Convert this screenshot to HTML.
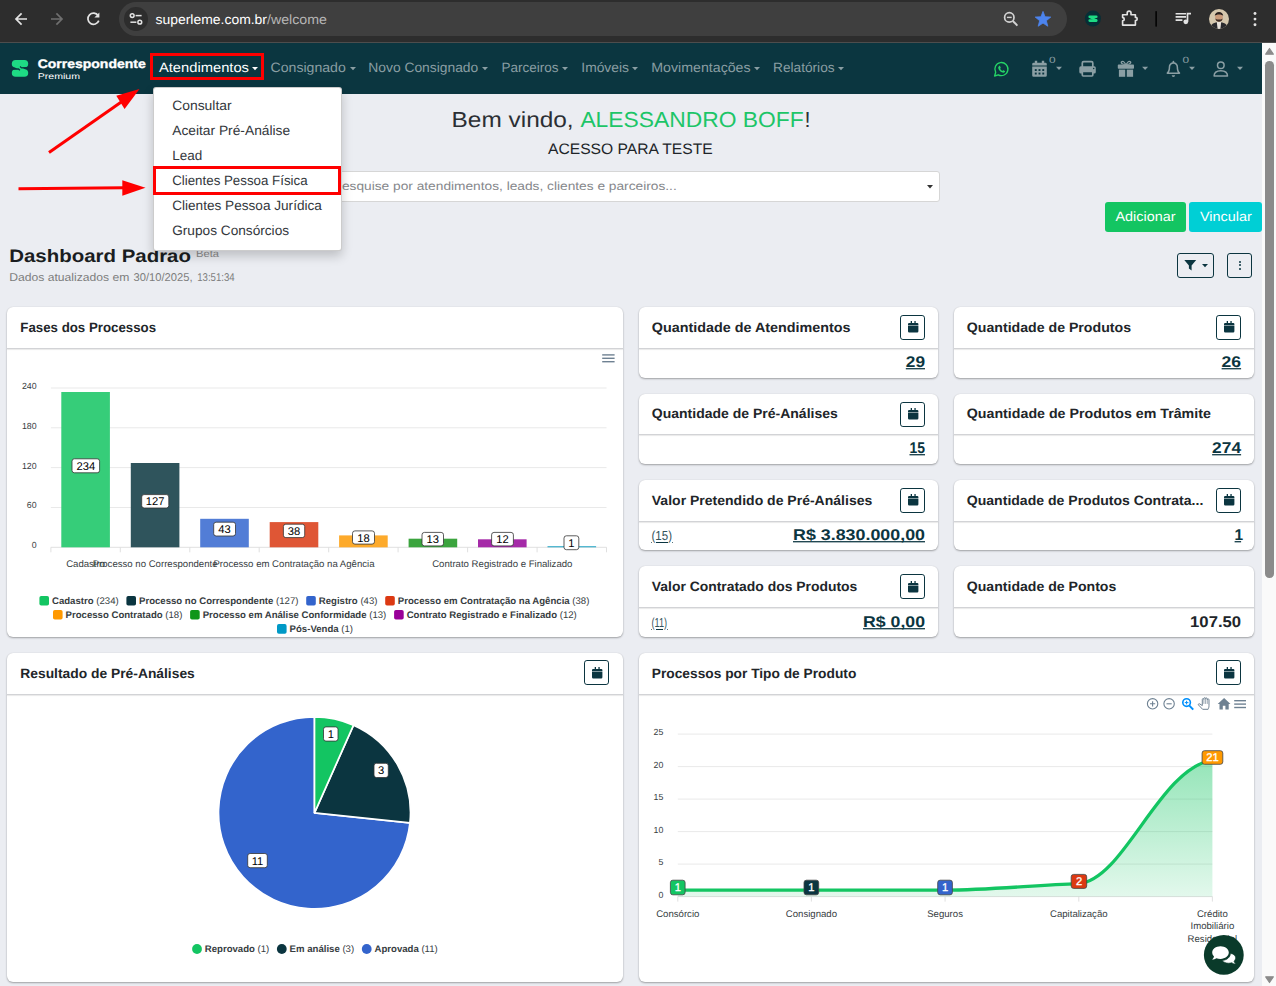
<!DOCTYPE html>
<html lang="pt-BR"><head><meta charset="utf-8"><title>Dashboard</title>
<style>
html,body{margin:0;padding:0}
body{text-rendering:geometricPrecision;width:1276px;height:986px;overflow:hidden;position:relative;background:#ebedf2;font-family:"Liberation Sans",sans-serif}
.a{position:absolute;box-sizing:border-box}
.t{position:absolute;white-space:nowrap;font-family:"Liberation Sans",sans-serif}
svg{position:absolute;overflow:visible;text-rendering:geometricPrecision}
svg.tx{left:0;top:0;font-family:"Liberation Sans",sans-serif}
svg.tx text{white-space:pre}
.card{position:absolute;box-sizing:border-box;background:#fff;border-radius:6px;box-shadow:0 1px 2px rgba(0,0,0,.32),0 0 1px rgba(0,0,0,.12)}
.hl{position:absolute;height:1px;background:#d2d3d6;box-shadow:0 1px 1px rgba(0,0,0,.10)}
.cb{position:absolute;box-sizing:border-box;border:1.2px solid #0b3540;border-radius:2.9px;background:#fff}
</style></head><body>
<div class="a" style="left:0.00px;top:0.00px;width:1276.00px;height:42.00px;background:#2d2d2d"></div>
<div class="a" style="left:0.00px;top:42.00px;width:1276.00px;height:1.00px;background:#4d4d4d"></div>
<div class="a" style="left:119.00px;top:2.20px;width:948.30px;height:33.60px;background:#3f3f3f;border-radius:17px"></div>
<div class="a" style="left:124.20px;top:7.00px;width:23.60px;height:23.60px;background:#2d2d2d;border-radius:50%"></div>
<svg class="tx" width="1" height="1"><text x="155.50" y="23.70" font-size="13.40" fill="#ffffff" textLength="111.50" lengthAdjust="spacingAndGlyphs">superleme.com.br</text></svg>
<svg class="tx" width="1" height="1"><text x="267.00" y="23.70" font-size="13.40" fill="#b5b5b5" textLength="60.00" lengthAdjust="spacingAndGlyphs">/welcome</text></svg>
<svg style="left:0;top:0" width="1276" height="42" viewBox="0 0 1276 42">
<g fill="none" stroke="#e3e3e3" stroke-width="1.7" stroke-linecap="butt" stroke-linejoin="miter"><path d="M27 19 H16.4 M21.6 13.4 L16 19 L21.6 24.6"/></g>
<g fill="none" stroke="#6f6f6f" stroke-width="1.7"><path d="M51 19 H61.6 M56.4 13.4 L62 19 L56.4 24.6"/></g>
<g fill="none" stroke="#e3e3e3" stroke-width="1.7"><path d="M98.2 15.6 A5.6 5.6 0 1 0 98.8 20.6"/></g><path d="M99.4 12.6 V17.6 H94.4 Z" fill="#e3e3e3"/>
<g fill="none" stroke="#e3e3e3" stroke-width="1.5"><circle cx="132.2" cy="15.6" r="1.9"/><path d="M135.6 15.6 H141.6"/><circle cx="139.8" cy="22.2" r="1.9"/><path d="M130.4 22.2 H136.4"/></g>
<g fill="none" stroke="#d2d2d2" stroke-width="1.7"><circle cx="1009.3" cy="17.4" r="4.7"/><path d="M1012.8 21 L1017.4 25.600" stroke-width="1.900"/><path d="M1006.900 17.400 H1011.700" stroke-width="1.400"/></g>
<polygon points="1043.00,11.40 1045.06,16.77 1050.80,17.07 1046.33,20.68 1047.82,26.23 1043.00,23.10 1038.18,26.23 1039.67,20.68 1035.20,17.07 1040.94,16.77" fill="#4c84ee" stroke="#4c84ee" stroke-width="0.8" stroke-linejoin="round"/>
<circle cx="1092.9" cy="18.6" r="8" fill="#062e36"/>
<g stroke="#1edb84" stroke-linecap="round" fill="none"><path d="M1089.700 16.700 H1096.300 M1089.700 20.600 H1096.300" stroke-width="2.600"/><path d="M1089.900 17 L1096.100 20.300" stroke-width="2.100"/></g>
<path d="M1122.6 14.7 H1127.2 V13.1 a1.9 1.9 0 0 1 3.800 0 V14.7 H1135.400 V17.400 h.2 a1.600 1.600 0 0 1 0 3.200 h-.2 V25.100 H1122.600 V20.700 h.1 a1.550 1.550 0 0 0 0 -3.100 h-.1 Z" fill="none" stroke="#e3e3e3" stroke-width="1.650" stroke-linejoin="round"/>
<rect x="1155.3" y="11.2" width="1.7" height="15.4" fill="#050505"/>
<g fill="none" stroke="#e3e3e3" stroke-width="1.6"><path d="M1175.6 13.7 H1186 M1175.6 16.9 H1186 M1175.6 20.1 H1182.4"/><path d="M1187.500 21.800 V13.700 H1191" stroke-width="1.700"/></g><circle cx="1185.800" cy="21.800" r="2.400" fill="#e3e3e3"/>
<defs><clipPath id="av"><circle cx="1219" cy="19" r="10"/></clipPath></defs>
<g clip-path="url(#av)"><rect x="1209" y="9" width="20" height="20" fill="#d5c7ad"/><ellipse cx="1219" cy="27.5" rx="8.5" ry="5.5" fill="#2a2a2e"/><path d="M1216.8 22 h4.4 l-.8 7 h-2.8 z" fill="#e8e2da"/><ellipse cx="1219" cy="17" rx="3.9" ry="4.7" fill="#c99a7a"/><path d="M1214.8 16 c0 -5.4 8.4 -5.4 8.4 0 c-1 -2 -7.4 -2 -8.4 0 z" fill="#2b2220"/><path d="M1215.4 18.4 c.4 4.4 6.8 4.4 7.2 0 c-1.6 1.6 -5.6 1.6 -7.2 0 z" fill="#3a2a24"/></g>
<circle cx="1255" cy="13.5" r="1.45" fill="#e3e3e3"/>
<circle cx="1255" cy="19.1" r="1.45" fill="#e3e3e3"/>
<circle cx="1255" cy="24.7" r="1.45" fill="#e3e3e3"/>
</svg>
<div class="a" style="left:0.00px;top:43.00px;width:1262.00px;height:50.80px;background:#0b3640"></div>
<div class="a" style="left:1262.00px;top:43.00px;width:14.00px;height:943.00px;background:#fafafa"></div>
<div class="a" style="left:1265.20px;top:61.00px;width:8.60px;height:516.50px;background:#8b8b8b;border-radius:4.3px"></div>
<svg style="left:1264px;top:47px" width="11" height="9"><path d="M1.700 7.200 L5.500 1.500 L9.300 7.200 Z" fill="#8b8b8b" stroke="#8b8b8b" stroke-width="1.200" stroke-linejoin="round"/></svg>
<svg style="left:1264px;top:975px" width="11" height="9"><path d="M1.700 1.800 L5.500 7.500 L9.300 1.800 Z" fill="#8b8b8b" stroke="#8b8b8b" stroke-width="1.200" stroke-linejoin="round"/></svg>
<svg style="left:0;top:0" width="40" height="90" viewBox="0 0 40 90"><g fill="#1edb84"><rect x="11.8" y="60" width="16.4" height="7.6" rx="3.8"/><rect x="11.8" y="69.2" width="16.4" height="7.6" rx="3.8"/><path d="M12.4 65 L21 66.4 L27.6 71.6 L19 70.6 Z"/></g><g stroke="#0b3540" stroke-width="1.3" fill="none"><path d="M29 67.6 L21.6 67.9 L20 66.6"/><path d="M11 69.1 L18.4 68.9 L20 70.2"/></g></svg>
<svg class="tx" width="1" height="1"><text x="37.70" y="67.70" font-size="12.40" fill="#ffffff" font-weight="700" stroke="#ffffff" stroke-width="0.35" textLength="108.00" lengthAdjust="spacingAndGlyphs">Correspondente</text></svg>
<svg class="tx" width="1" height="1"><text x="37.70" y="78.60" font-size="8.30" fill="#ffffff" textLength="42.30" lengthAdjust="spacingAndGlyphs">Premium</text></svg>
<svg class="tx" width="1" height="1"><text x="158.90" y="72.00" font-size="13.50" fill="#ffffff" textLength="90.10" lengthAdjust="spacingAndGlyphs">Atendimentos</text></svg>
<svg style="left:252.3px;top:66.6px" width="6" height="4"><path d="M0 0 L6 0 L3 3.300 Z" fill="#ffffff"/></svg>
<svg class="tx" width="1" height="1"><text x="270.50" y="72.00" font-size="13.50" fill="#8a9ea3" textLength="75.30" lengthAdjust="spacingAndGlyphs">Consignado</text></svg>
<svg style="left:349.5px;top:66.6px" width="6" height="4"><path d="M0 0 L6 0 L3 3.300 Z" fill="#8a9ea3"/></svg>
<svg class="tx" width="1" height="1"><text x="368.30" y="72.00" font-size="13.50" fill="#8a9ea3" textLength="109.90" lengthAdjust="spacingAndGlyphs">Novo Consignado</text></svg>
<svg style="left:482.0px;top:66.6px" width="6" height="4"><path d="M0 0 L6 0 L3 3.300 Z" fill="#8a9ea3"/></svg>
<svg class="tx" width="1" height="1"><text x="501.50" y="72.00" font-size="13.50" fill="#8a9ea3" textLength="56.90" lengthAdjust="spacingAndGlyphs">Parceiros</text></svg>
<svg style="left:562.2px;top:66.6px" width="6" height="4"><path d="M0 0 L6 0 L3 3.300 Z" fill="#8a9ea3"/></svg>
<svg class="tx" width="1" height="1"><text x="581.30" y="72.00" font-size="13.50" fill="#8a9ea3" textLength="47.70" lengthAdjust="spacingAndGlyphs">Imóveis</text></svg>
<svg style="left:632.2px;top:66.6px" width="6" height="4"><path d="M0 0 L6 0 L3 3.300 Z" fill="#8a9ea3"/></svg>
<svg class="tx" width="1" height="1"><text x="651.30" y="72.00" font-size="13.50" fill="#8a9ea3" textLength="99.30" lengthAdjust="spacingAndGlyphs">Movimentações</text></svg>
<svg style="left:754.2px;top:66.6px" width="6" height="4"><path d="M0 0 L6 0 L3 3.300 Z" fill="#8a9ea3"/></svg>
<svg class="tx" width="1" height="1"><text x="773.00" y="72.00" font-size="13.50" fill="#8a9ea3" textLength="61.60" lengthAdjust="spacingAndGlyphs">Relatórios</text></svg>
<svg style="left:838.2px;top:66.6px" width="6" height="4"><path d="M0 0 L6 0 L3 3.300 Z" fill="#8a9ea3"/></svg>
<svg style="left:0;top:0" width="1261" height="93" viewBox="0 0 1261 93">
<g><path d="M994.600 76 L995.700 72.300 A6.550 6.550 0 1 1 998.200 74.800 Z" fill="none" stroke="#25d366" stroke-width="1.350" stroke-linejoin="round"/><path d="M999 66.200 c.3 -.5 .8 -.5 1.100 0 l.6 1.300 c.1 .3 0 .5 -.2 .7 l-.4 .5 c.5 1 1.200 1.700 2.200 2.200 l.5 -.5 c.2 -.2 .5 -.3 .7 -.1 l1.300 .7 c.4 .2 .4 .700 .1 1 c-.6 .7 -1.400 .9 -2.300 .6 c-2.100 -.6 -3.700 -2.200 -4.300 -4.300 c-.3 -.8 0 -1.600 .700 -2.100 z" fill="#25d366"/></g>
<g fill="#8b9fa4"><path d="M1034.8 60.8 h2.400 v2 h4.600 v-2 h2.400 v2 h1.200 a1.400 1.400 0 0 1 1.400 1.400 v1.400 h-14.600 v-1.400 a1.400 1.400 0 0 1 1.400 -1.400 h1.200 z"/><path d="M1032.2 66.5 h14.600 v8.900 a1.400 1.400 0 0 1 -1.400 1.400 h-11.800 a1.400 1.400 0 0 1 -1.400 -1.400 z"/></g><g fill="#0b3540"><rect x="1034.80" y="69.10" width="1.900" height="1.900"/><rect x="1038.55" y="69.10" width="1.900" height="1.900"/><rect x="1042.30" y="69.10" width="1.900" height="1.900"/><rect x="1034.80" y="72.60" width="1.900" height="1.900"/><rect x="1038.55" y="72.60" width="1.900" height="1.900"/><rect x="1042.30" y="72.60" width="1.900" height="1.900"/></g>
<text transform="translate(1048.900,62.700) scale(1.320,1)" font-size="9" fill="#8b9fa4" font-family="Liberation Sans, sans-serif">0</text>
<path d="M1056.0 66.8 h6 l-3 3.300 z" fill="#8b9fa4"/>
<rect x="1082.300" y="61.700" width="10.500" height="8" rx="1.300" fill="none" stroke="#8b9fa4" stroke-width="1.700"/><rect x="1079.300" y="66.300" width="16.500" height="7.200" rx="1.600" fill="#8b9fa4"/><rect x="1082.300" y="71.300" width="10.500" height="4.700" rx=".9" fill="#0b3540" stroke="#8b9fa4" stroke-width="1.700"/><circle cx="1093.700" cy="68.600" r=".75" fill="#0b3540"/>
<g fill="#8b9fa4"><rect x="1117.800" y="64.600" width="16.200" height="4.100" rx=".8"/><rect x="1118.900" y="69.600" width="6.300" height="7.200"/><rect x="1126.800" y="69.600" width="6.300" height="7.200"/><path d="M1126 65 c-3.600 0 -5.400 -1 -5.400 -2.500 c0 -1.100 .9 -1.800 1.900 -1.800 c1.600 0 2.600 1.500 3.500 3 c.9 -1.500 1.900 -3 3.500 -3 c1 0 1.900 .7 1.900 1.800 c0 1.500 -1.800 2.500 -5.400 2.500 z m-1.200 -1.200 c-.6 -1 -1.300 -1.900 -2.100 -1.900 c-.4 0 -.7 .2 -.7 .6 c0 .6 1 1.200 2.800 1.300 z m2.400 0 c1.800 -.1 2.800 -.7 2.800 -1.300 c0 -.4 -.3 -.6 -.7 -.6 c-.8 0 -1.500 .9 -2.100 1.900 z"/></g>
<path d="M1142.1 66.8 h6 l-3 3.300 z" fill="#8b9fa4"/>
<path d="M1173.400 60.800 c.5 0 .9 .4 .9 .9 v.6 c2.300 .5 3.800 2.400 3.800 4.800 c0 2.500 .6 4.200 1.900 5.400 c.5 .5 .2 1.500 -.6 1.500 h-12 c-.8 0 -1.100 -1 -.6 -1.500 c1.300 -1.200 1.900 -2.900 1.900 -5.400 c0 -2.400 1.500 -4.300 3.800 -4.800 v-.6 c0 -.5 .4 -.9 .9 -.9 z m0 3 c-1.900 0 -3.200 1.400 -3.200 3.300 c0 2.200 -.4 3.900 -1.200 5.300 h8.800 c-.8 -1.400 -1.200 -3.100 -1.200 -5.300 c0 -1.900 -1.300 -3.300 -3.200 -3.300 z m-1.700 11.400 h3.400 a1.700 1.700 0 0 1 -3.400 0 z" fill="#8b9fa4"/>
<text transform="translate(1182.600,62.700) scale(1.320,1)" font-size="9" fill="#8b9fa4" font-family="Liberation Sans, sans-serif">0</text>
<path d="M1189.0 66.8 h6 l-3 3.300 z" fill="#8b9fa4"/>
<g fill="none" stroke="#8b9fa4" stroke-width="1.500"><circle cx="1220.800" cy="65.300" r="3.300"/><path d="M1214.100 76.000 c0 -3.800 3 -5.300 6.700 -5.300 s6.700 1.500 6.700 5.300 z" stroke-linejoin="round"/></g>
<path d="M1237.0 66.8 h6 l-3 3.300 z" fill="#8b9fa4"/>
</svg>
<svg class="tx" width="1" height="1"><text x="451.60" y="126.80" font-size="21.70" fill="#2b2f34" textLength="128.80" lengthAdjust="spacingAndGlyphs">Bem vindo, </text></svg>
<svg class="tx" width="1" height="1"><text x="580.40" y="126.80" font-size="21.70" fill="#1dc568" textLength="223.20" lengthAdjust="spacingAndGlyphs">ALESSANDRO BOFF</text></svg>
<svg class="tx" width="1" height="1"><text x="804.50" y="126.80" font-size="21.70" fill="#2b2f34">!</text></svg>
<svg class="tx" width="1" height="1"><text x="548.00" y="153.80" font-size="15.10" fill="#212529" textLength="164.70" lengthAdjust="spacingAndGlyphs">ACESSO PARA TESTE</text></svg>
<div class="a" style="left:322.00px;top:171.00px;width:617.50px;height:30.50px;background:#fff;border:1px solid #d6d6d6;border-radius:3px"></div>
<svg class="tx" width="1" height="1"><text x="332.80" y="190.30" font-size="11.90" fill="#85878b" textLength="343.90" lengthAdjust="spacingAndGlyphs">Pesquise por atendimentos, leads, clientes e parceiros...</text></svg>
<svg style="left:926.5px;top:184.5px" width="6" height="4"><path d="M0 0 L6 0 L3 3.6 Z" fill="#333"/></svg>
<div class="a" style="left:1104.80px;top:202.00px;width:81.30px;height:30.00px;background:#13c562;border-radius:3px"></div>
<svg class="tx" width="1" height="1"><text x="1115.50" y="220.90" font-size="13.30" fill="#ffffff" textLength="60.00" lengthAdjust="spacingAndGlyphs">Adicionar</text></svg>
<div class="a" style="left:1189.00px;top:202.00px;width:72.80px;height:30.00px;background:#00cfd5;border-radius:3px"></div>
<svg class="tx" width="1" height="1"><text x="1200.00" y="220.90" font-size="13.30" fill="#ffffff" textLength="51.80" lengthAdjust="spacingAndGlyphs">Vincular</text></svg>
<div class="a" style="left:1176.80px;top:253.00px;width:37.00px;height:24.70px;border:1px solid #0b3540;border-radius:3px"></div>
<svg style="left:1183.5px;top:259.5px" width="13" height="11" viewBox="0 0 13 11"><path d="M0.3 0 H12.2 L7.6 5.6 V10.6 L4.9 8.6 V5.6 Z" fill="#0b3540"/></svg>
<svg style="left:1201.5px;top:264px" width="6" height="4"><path d="M0 0 L6 0 L3 3.2 Z" fill="#0b3540"/></svg>
<div class="a" style="left:1227.00px;top:253.00px;width:24.80px;height:24.70px;border:1px solid #0b3540;border-radius:3px"></div>
<div class="a" style="left:1238.50px;top:260.50px;width:2.00px;height:2.00px;background:#0b3540;border-radius:50%"></div>
<div class="a" style="left:1238.50px;top:264.30px;width:2.00px;height:2.00px;background:#0b3540;border-radius:50%"></div>
<div class="a" style="left:1238.50px;top:268.10px;width:2.00px;height:2.00px;background:#0b3540;border-radius:50%"></div>
<svg class="tx" width="1" height="1"><defs><clipPath id="hc"><path d="M0 236 H165.500 V252.300 H179.500 V236 H300 V272 H0 Z"/></clipPath></defs></svg>
<svg class="tx" width="1" height="1"><text x="9.20" y="261.80" font-size="18.00" fill="#1a1d21" font-weight="700" clip-path="url(#hc)" textLength="181.80" lengthAdjust="spacingAndGlyphs">Dashboard Padrão</text></svg>
<svg class="tx" width="1" height="1"><text x="196.00" y="257.20" font-size="10.00" fill="#8a8a8a" textLength="23.00" lengthAdjust="spacingAndGlyphs">Beta</text></svg>
<svg class="tx" width="1" height="1"><text x="9.20" y="280.80" font-size="11.30" fill="#7d7d7d" textLength="120.20" lengthAdjust="spacingAndGlyphs">Dados atualizados em</text></svg>
<svg class="tx" width="1" height="1"><text x="133.50" y="280.80" font-size="11.30" fill="#7d7d7d" textLength="59.00" lengthAdjust="spacingAndGlyphs">30/10/2025,</text></svg>
<svg class="tx" width="1" height="1"><text x="197.20" y="280.80" font-size="11.30" fill="#7d7d7d" textLength="37.50" lengthAdjust="spacingAndGlyphs">13:51:34</text></svg>
<div class="card" style="left:7.0px;top:307.0px;width:616.3px;height:330.0px"></div>
<div class="hl" style="left:7.0px;top:348.0px;width:616.3px"></div>
<svg class="tx" width="1" height="1"><text x="20.30" y="332.40" font-size="13.60" fill="#212529" font-weight="700" textLength="135.80" lengthAdjust="spacingAndGlyphs">Fases dos Processos</text></svg>
<div class="card" style="left:7.0px;top:653.0px;width:616.3px;height:329.0px"></div>
<div class="hl" style="left:7.0px;top:694.0px;width:616.3px"></div>
<svg class="tx" width="1" height="1"><text x="20.30" y="678.40" font-size="13.60" fill="#212529" font-weight="700" textLength="174.50" lengthAdjust="spacingAndGlyphs">Resultado de Pré-Análises</text></svg>
<div class="cb" style="left:584.4px;top:660.3px;width:25.1px;height:25.1px"></div>
<svg style="left:592.1px;top:666.5px" width="10.4" height="11.5" viewBox="0 0 10.4 11.5"><path d="M2.700 0 h1.300 v1.900 h2.400 v-1.900 h1.300 v1.900 h1.600 a1.100 1.100 0 0 1 1.100 1.100 v.9 h-10.400 v-.9 a1.100 1.100 0 0 1 1.100 -1.100 h1.600 z M0 4.600 h10.400 v5.700 a1.200 1.200 0 0 1 -1.200 1.200 h-8 a1.200 1.200 0 0 1 -1.200 -1.200 z" fill="#0b3540"/></svg>
<div class="card" style="left:638.8px;top:653.0px;width:615.4px;height:329.0px"></div>
<div class="hl" style="left:638.8px;top:694.0px;width:615.4px"></div>
<svg class="tx" width="1" height="1"><text x="651.80" y="678.40" font-size="13.60" fill="#212529" font-weight="700" textLength="204.50" lengthAdjust="spacingAndGlyphs">Processos por Tipo de Produto</text></svg>
<div class="cb" style="left:1216.1px;top:660.3px;width:25.1px;height:25.1px"></div>
<svg style="left:1223.8px;top:666.5px" width="10.4" height="11.5" viewBox="0 0 10.4 11.5"><path d="M2.700 0 h1.300 v1.900 h2.400 v-1.900 h1.300 v1.900 h1.600 a1.100 1.100 0 0 1 1.100 1.100 v.9 h-10.400 v-.9 a1.100 1.100 0 0 1 1.100 -1.100 h1.600 z M0 4.600 h10.400 v5.700 a1.200 1.200 0 0 1 -1.200 1.200 h-8 a1.200 1.200 0 0 1 -1.200 -1.200 z" fill="#0b3540"/></svg>
<div class="card" style="left:638.8px;top:306.8px;width:299.2px;height:71.0px"></div>
<div class="hl" style="left:638.8px;top:347.6px;width:299.2px"></div>
<svg class="tx" width="1" height="1"><text x="651.80" y="332.00" font-size="13.50" fill="#212529" font-weight="700" textLength="198.80" lengthAdjust="spacingAndGlyphs">Quantidade de Atendimentos</text></svg>
<div class="cb" style="left:899.9px;top:314.9px;width:25.1px;height:25.1px"></div>
<svg style="left:907.6px;top:321.1px" width="10.4" height="11.5" viewBox="0 0 10.4 11.5"><path d="M2.700 0 h1.300 v1.900 h2.400 v-1.900 h1.300 v1.900 h1.600 a1.100 1.100 0 0 1 1.100 1.100 v.9 h-10.400 v-.9 a1.100 1.100 0 0 1 1.100 -1.100 h1.600 z M0 4.600 h10.400 v5.700 a1.200 1.200 0 0 1 -1.200 1.200 h-8 a1.200 1.200 0 0 1 -1.200 -1.200 z" fill="#0b3540"/></svg>
<svg class="tx" width="1" height="1"><text x="905.80" y="367.00" font-size="15.50" fill="#0b3540" font-weight="700" textLength="19.20" lengthAdjust="spacingAndGlyphs">29</text><rect x="905.80" y="368.10" width="19.20" height="1.25" fill="#0b3540"/></svg>
<div class="card" style="left:953.8px;top:306.8px;width:300.3px;height:71.0px"></div>
<div class="hl" style="left:953.8px;top:347.6px;width:300.3px"></div>
<svg class="tx" width="1" height="1"><text x="966.80" y="332.00" font-size="13.50" fill="#212529" font-weight="700" textLength="164.20" lengthAdjust="spacingAndGlyphs">Quantidade de Produtos</text></svg>
<div class="cb" style="left:1216.0px;top:314.9px;width:25.1px;height:25.1px"></div>
<svg style="left:1223.7px;top:321.1px" width="10.4" height="11.5" viewBox="0 0 10.4 11.5"><path d="M2.700 0 h1.300 v1.900 h2.400 v-1.900 h1.300 v1.900 h1.600 a1.100 1.100 0 0 1 1.100 1.100 v.9 h-10.400 v-.9 a1.100 1.100 0 0 1 1.100 -1.100 h1.600 z M0 4.600 h10.400 v5.700 a1.200 1.200 0 0 1 -1.200 1.200 h-8 a1.200 1.200 0 0 1 -1.200 -1.200 z" fill="#0b3540"/></svg>
<svg class="tx" width="1" height="1"><text x="1221.60" y="367.00" font-size="15.50" fill="#0b3540" font-weight="700" textLength="19.50" lengthAdjust="spacingAndGlyphs">26</text><rect x="1221.60" y="368.10" width="19.50" height="1.25" fill="#0b3540"/></svg>
<div class="card" style="left:638.8px;top:394.1px;width:299.2px;height:69.6px"></div>
<div class="hl" style="left:638.8px;top:433.9px;width:299.2px"></div>
<svg class="tx" width="1" height="1"><text x="651.80" y="417.70" font-size="13.50" fill="#212529" font-weight="700" textLength="186.00" lengthAdjust="spacingAndGlyphs">Quantidade de Pré-Análises</text></svg>
<div class="cb" style="left:899.9px;top:401.7px;width:25.1px;height:25.1px"></div>
<svg style="left:907.6px;top:407.9px" width="10.4" height="11.5" viewBox="0 0 10.4 11.5"><path d="M2.700 0 h1.300 v1.900 h2.400 v-1.900 h1.300 v1.900 h1.600 a1.100 1.100 0 0 1 1.100 1.100 v.9 h-10.400 v-.9 a1.100 1.100 0 0 1 1.100 -1.100 h1.600 z M0 4.600 h10.400 v5.700 a1.200 1.200 0 0 1 -1.200 1.200 h-8 a1.200 1.200 0 0 1 -1.200 -1.200 z" fill="#0b3540"/></svg>
<svg class="tx" width="1" height="1"><text x="909.50" y="453.40" font-size="15.50" fill="#0b3540" font-weight="700" textLength="15.50" lengthAdjust="spacingAndGlyphs">15</text><rect x="909.50" y="454.10" width="15.50" height="1.25" fill="#0b3540"/></svg>
<div class="card" style="left:953.8px;top:394.1px;width:300.3px;height:69.6px"></div>
<div class="hl" style="left:953.8px;top:433.9px;width:300.3px"></div>
<svg class="tx" width="1" height="1"><text x="966.80" y="417.70" font-size="13.50" fill="#212529" font-weight="700" textLength="244.00" lengthAdjust="spacingAndGlyphs">Quantidade de Produtos em Trâmite</text></svg>
<svg class="tx" width="1" height="1"><text x="1212.10" y="453.40" font-size="15.50" fill="#0b3540" font-weight="700" textLength="29.00" lengthAdjust="spacingAndGlyphs">274</text><rect x="1212.10" y="454.10" width="29.00" height="1.25" fill="#0b3540"/></svg>
<div class="card" style="left:638.8px;top:479.9px;width:299.2px;height:70.4px"></div>
<div class="hl" style="left:638.8px;top:521.0px;width:299.2px"></div>
<svg class="tx" width="1" height="1"><text x="651.80" y="504.60" font-size="13.50" fill="#212529" font-weight="700" textLength="220.50" lengthAdjust="spacingAndGlyphs">Valor Pretendido de Pré-Análises</text></svg>
<div class="cb" style="left:899.9px;top:488.1px;width:25.1px;height:25.1px"></div>
<svg style="left:907.6px;top:494.3px" width="10.4" height="11.5" viewBox="0 0 10.4 11.5"><path d="M2.700 0 h1.300 v1.900 h2.400 v-1.900 h1.300 v1.900 h1.600 a1.100 1.100 0 0 1 1.100 1.100 v.9 h-10.400 v-.9 a1.100 1.100 0 0 1 1.100 -1.100 h1.600 z M0 4.600 h10.400 v5.700 a1.200 1.200 0 0 1 -1.200 1.200 h-8 a1.200 1.200 0 0 1 -1.200 -1.200 z" fill="#0b3540"/></svg>
<svg class="tx" width="1" height="1"><text x="793.00" y="539.90" font-size="15.50" fill="#0b3540" font-weight="700" textLength="132.00" lengthAdjust="spacingAndGlyphs">R$ 3.830.000,00</text><rect x="793.00" y="541.10" width="132.00" height="1.25" fill="#0b3540"/></svg>
<svg class="tx" width="1" height="1"><text x="651.50" y="540.10" font-size="13.00" fill="#35545d" textLength="20.50" lengthAdjust="spacingAndGlyphs">(15)</text></svg>
<div class="a" style="left:655.80px;top:541.60px;width:11.90px;height:0.90px;background:#0b3540"></div>
<div class="a" style="left:650.90px;top:541.50px;width:0.90px;height:1.00px;background:#5b747b"></div>
<div class="a" style="left:672.10px;top:541.50px;width:0.90px;height:1.00px;background:#5b747b"></div>
<div class="card" style="left:953.8px;top:479.9px;width:300.3px;height:70.4px"></div>
<div class="hl" style="left:953.8px;top:521.0px;width:300.3px"></div>
<svg class="tx" width="1" height="1"><text x="966.80" y="504.60" font-size="13.50" fill="#212529" font-weight="700" textLength="236.50" lengthAdjust="spacingAndGlyphs">Quantidade de Produtos Contrata...</text></svg>
<div class="cb" style="left:1216.0px;top:488.1px;width:25.1px;height:25.1px"></div>
<svg style="left:1223.7px;top:494.3px" width="10.4" height="11.5" viewBox="0 0 10.4 11.5"><path d="M2.700 0 h1.300 v1.900 h2.400 v-1.900 h1.300 v1.900 h1.600 a1.100 1.100 0 0 1 1.100 1.100 v.9 h-10.400 v-.9 a1.100 1.100 0 0 1 1.100 -1.100 h1.600 z M0 4.600 h10.400 v5.700 a1.200 1.200 0 0 1 -1.200 1.200 h-8 a1.200 1.200 0 0 1 -1.200 -1.200 z" fill="#0b3540"/></svg>
<svg class="tx" width="1" height="1"><text x="1234.60" y="539.90" font-size="15.50" fill="#0b3540" font-weight="700">1</text><rect x="1234.60" y="541.10" width="6.50" height="1.25" fill="#0b3540"/></svg>
<div class="card" style="left:638.8px;top:566.3px;width:299.2px;height:70.6px"></div>
<div class="hl" style="left:638.8px;top:607.0px;width:299.2px"></div>
<svg class="tx" width="1" height="1"><text x="651.80" y="591.10" font-size="13.50" fill="#212529" font-weight="700" textLength="205.50" lengthAdjust="spacingAndGlyphs">Valor Contratado dos Produtos</text></svg>
<div class="cb" style="left:899.9px;top:574.4px;width:25.1px;height:25.1px"></div>
<svg style="left:907.6px;top:580.6px" width="10.4" height="11.5" viewBox="0 0 10.4 11.5"><path d="M2.700 0 h1.300 v1.900 h2.400 v-1.900 h1.300 v1.900 h1.600 a1.100 1.100 0 0 1 1.100 1.100 v.9 h-10.400 v-.9 a1.100 1.100 0 0 1 1.100 -1.100 h1.600 z M0 4.600 h10.400 v5.700 a1.200 1.200 0 0 1 -1.200 1.200 h-8 a1.200 1.200 0 0 1 -1.200 -1.200 z" fill="#0b3540"/></svg>
<svg class="tx" width="1" height="1"><text x="863.00" y="627.00" font-size="15.50" fill="#0b3540" font-weight="700" textLength="62.00" lengthAdjust="spacingAndGlyphs">R$ 0,00</text><rect x="863.00" y="628.10" width="62.00" height="1.25" fill="#0b3540"/></svg>
<svg class="tx" width="1" height="1"><text x="651.50" y="627.20" font-size="13.00" fill="#35545d" textLength="15.60" lengthAdjust="spacingAndGlyphs">(11)</text></svg>
<div class="a" style="left:655.80px;top:628.60px;width:7.00px;height:0.90px;background:#0b3540"></div>
<div class="a" style="left:650.90px;top:628.50px;width:0.90px;height:1.00px;background:#5b747b"></div>
<div class="a" style="left:667.20px;top:628.50px;width:0.90px;height:1.00px;background:#5b747b"></div>
<div class="card" style="left:953.8px;top:566.3px;width:300.3px;height:70.6px"></div>
<div class="hl" style="left:953.8px;top:607.0px;width:300.3px"></div>
<svg class="tx" width="1" height="1"><text x="966.80" y="591.10" font-size="13.50" fill="#212529" font-weight="700" textLength="149.50" lengthAdjust="spacingAndGlyphs">Quantidade de Pontos</text></svg>
<svg class="tx" width="1" height="1"><text x="1190.10" y="627.00" font-size="15.50" fill="#212529" font-weight="700" textLength="51.00" lengthAdjust="spacingAndGlyphs">107.50</text></svg>
<svg style="left:0;top:0" width="1276" height="986" viewBox="0 0 1276 986" font-family="Liberation Sans, sans-serif">
<line x1="50.9" y1="388.0" x2="606.5" y2="388.0" stroke="#e6e6e6" stroke-width="0.9"/>
<line x1="50.9" y1="427.8" x2="606.5" y2="427.8" stroke="#e6e6e6" stroke-width="0.9"/>
<line x1="50.9" y1="467.6" x2="606.5" y2="467.6" stroke="#e6e6e6" stroke-width="0.9"/>
<line x1="50.9" y1="507.5" x2="606.5" y2="507.5" stroke="#e6e6e6" stroke-width="0.9"/>
<line x1="50.9" y1="547.3" x2="606.5" y2="547.3" stroke="#dcdcdc" stroke-width="0.9"/>
<line x1="50.9" y1="547.3" x2="50.9" y2="552.3" stroke="#dcdcdc" stroke-width="0.9"/>
<line x1="120.3" y1="547.3" x2="120.3" y2="552.3" stroke="#dcdcdc" stroke-width="0.9"/>
<line x1="189.8" y1="547.3" x2="189.8" y2="552.3" stroke="#dcdcdc" stroke-width="0.9"/>
<line x1="259.2" y1="547.3" x2="259.2" y2="552.3" stroke="#dcdcdc" stroke-width="0.9"/>
<line x1="328.7" y1="547.3" x2="328.7" y2="552.3" stroke="#dcdcdc" stroke-width="0.9"/>
<line x1="398.1" y1="547.3" x2="398.1" y2="552.3" stroke="#dcdcdc" stroke-width="0.9"/>
<line x1="467.6" y1="547.3" x2="467.6" y2="552.3" stroke="#dcdcdc" stroke-width="0.9"/>
<line x1="537.1" y1="547.3" x2="537.1" y2="552.3" stroke="#dcdcdc" stroke-width="0.9"/>
<line x1="606.5" y1="547.3" x2="606.5" y2="552.3" stroke="#dcdcdc" stroke-width="0.9"/>
<text x="36.6" y="389.0" font-size="8.8" fill="#373d3f" text-anchor="end">240</text>
<text x="36.6" y="428.8" font-size="8.8" fill="#373d3f" text-anchor="end">180</text>
<text x="36.6" y="468.6" font-size="8.8" fill="#373d3f" text-anchor="end">120</text>
<text x="36.6" y="508.4" font-size="8.8" fill="#373d3f" text-anchor="end">60</text>
<text x="36.6" y="548.2" font-size="8.8" fill="#373d3f" text-anchor="end">0</text>
<rect x="61.3" y="392.0" width="48.6" height="155.3" fill="#36cd79"/>
<rect x="130.8" y="463.0" width="48.6" height="84.3" fill="#2f545c"/>
<rect x="200.2" y="518.8" width="48.6" height="28.5" fill="#527dd6"/>
<rect x="269.7" y="522.1" width="48.6" height="25.2" fill="#df5635"/>
<rect x="339.1" y="535.4" width="48.6" height="11.9" fill="#fdaa2b"/>
<rect x="408.6" y="538.7" width="48.6" height="8.6" fill="#3ba43e"/>
<rect x="478.0" y="539.3" width="48.6" height="8.0" fill="#a52aa8"/>
<rect x="547.5" y="546.2" width="48.6" height="1.1" fill="#2ca8c8"/>
<rect x="72.0" y="458.8" width="27.6" height="14.0" rx="2.4" fill="#fff" stroke="#333" stroke-width="0.8"/>
<text x="85.8" y="469.8" font-size="11.2" fill="#000" text-anchor="middle">234</text>
<rect x="141.7" y="494.6" width="27.1" height="13.4" rx="2.4" fill="#fff" stroke="#333" stroke-width="0.8"/>
<text x="155.2" y="505.3" font-size="11.2" fill="#000" text-anchor="middle">127</text>
<rect x="213.7" y="522.2" width="21.8" height="13.8" rx="2.4" fill="#fff" stroke="#333" stroke-width="0.8"/>
<text x="224.6" y="533.1" font-size="11.2" fill="#000" text-anchor="middle">43</text>
<rect x="283.4" y="524.2" width="21.3" height="13.4" rx="2.4" fill="#fff" stroke="#333" stroke-width="0.8"/>
<text x="294.0" y="534.9" font-size="11.2" fill="#000" text-anchor="middle">38</text>
<rect x="352.5" y="530.9" width="22.0" height="13.2" rx="2.4" fill="#fff" stroke="#333" stroke-width="0.8"/>
<text x="363.5" y="541.5" font-size="11.2" fill="#000" text-anchor="middle">18</text>
<rect x="422.0" y="532.4" width="21.5" height="13.5" rx="2.4" fill="#fff" stroke="#333" stroke-width="0.8"/>
<text x="432.8" y="543.1" font-size="11.2" fill="#000" text-anchor="middle">13</text>
<rect x="491.6" y="532.4" width="21.8" height="13.5" rx="2.4" fill="#fff" stroke="#333" stroke-width="0.8"/>
<text x="502.5" y="543.1" font-size="11.2" fill="#000" text-anchor="middle">12</text>
<rect x="564.0" y="535.8" width="14.8" height="13.9" rx="2.4" fill="#fff" stroke="#333" stroke-width="0.8"/>
<text x="571.4" y="546.8" font-size="11.2" fill="#000" text-anchor="middle">1</text>
<text x="85.6" y="567" font-size="9.6" fill="#373d3f" text-anchor="middle">Cadastro</text>
<text x="155.1" y="567" font-size="9.6" fill="#373d3f" text-anchor="middle">Processo no Correspondente</text>
<text x="294.0" y="567" font-size="9.6" fill="#373d3f" text-anchor="middle">Processo em Contratação na Agência</text>
<text x="502.3" y="567" font-size="9.6" fill="#373d3f" text-anchor="middle">Contrato Registrado e Finalizado</text>
<rect x="39.4" y="596.0" width="9.6" height="9.6" rx="1.8" fill="#13c562"/>
<text x="52.0" y="604.2" font-size="9.6" fill="#373d3f"><tspan font-weight="700">Cadastro</tspan> (234)</text>
<rect x="126.4" y="596.0" width="9.6" height="9.6" rx="1.8" fill="#0b3540"/>
<text x="139.0" y="604.2" font-size="9.6" fill="#373d3f"><tspan font-weight="700">Processo no Correspondente</tspan> (127)</text>
<rect x="306.2" y="596.0" width="9.6" height="9.6" rx="1.8" fill="#3364cc"/>
<text x="318.8" y="604.2" font-size="9.6" fill="#373d3f"><tspan font-weight="700">Registro</tspan> (43)</text>
<rect x="385.2" y="596.0" width="9.6" height="9.6" rx="1.8" fill="#dc3912"/>
<text x="397.8" y="604.2" font-size="9.6" fill="#373d3f"><tspan font-weight="700">Processo em Contratação na Agência</tspan> (38)</text>
<rect x="53.0" y="610.0" width="9.6" height="9.6" rx="1.8" fill="#ff9900"/>
<text x="65.6" y="618.2" font-size="9.6" fill="#373d3f"><tspan font-weight="700">Processo Contratado</tspan> (18)</text>
<rect x="190.1" y="610.0" width="9.6" height="9.6" rx="1.8" fill="#109618"/>
<text x="202.7" y="618.2" font-size="9.6" fill="#373d3f"><tspan font-weight="700">Processo em Análise Conformidade</tspan> (13)</text>
<rect x="394.1" y="610.0" width="9.6" height="9.6" rx="1.8" fill="#990099"/>
<text x="406.7" y="618.2" font-size="9.6" fill="#373d3f"><tspan font-weight="700">Contrato Registrado e Finalizado</tspan> (12)</text>
<rect x="277.0" y="624.1" width="9.6" height="9.6" rx="1.8" fill="#0099c6"/>
<text x="289.6" y="632.3" font-size="9.6" fill="#373d3f"><tspan font-weight="700">Pós-Venda</tspan> (1)</text>
<line x1="602.2" y1="354.9" x2="614.6" y2="354.9" stroke="#6e8192" stroke-width="1.4"/>
<line x1="602.2" y1="358.3" x2="614.6" y2="358.3" stroke="#6e8192" stroke-width="1.4"/>
<line x1="602.2" y1="361.7" x2="614.6" y2="361.7" stroke="#6e8192" stroke-width="1.4"/>
<path d="M314.50 812.80 L409.97 822.83 A96.00 96.00 0 1 1 314.50 716.80 Z" fill="#3364cc" stroke="#fff" stroke-width="1.7" stroke-linejoin="round"/>
<path d="M314.50 812.80 L353.55 725.10 A96.00 96.00 0 0 1 409.97 822.83 Z" fill="#0b3540" stroke="#fff" stroke-width="1.7" stroke-linejoin="round"/>
<path d="M314.50 812.80 L314.50 716.80 A96.00 96.00 0 0 1 353.55 725.10 Z" fill="#13c562" stroke="#fff" stroke-width="1.7" stroke-linejoin="round"/>
<rect x="323.5" y="726.9" width="14.5" height="14.2" rx="2.4" fill="#fff" stroke="#333" stroke-width="0.8"/>
<text x="330.8" y="738.0" font-size="11.2" fill="#000" text-anchor="middle">1</text>
<rect x="374.0" y="763.3" width="14.3" height="14.2" rx="2.4" fill="#fff" stroke="#333" stroke-width="0.8"/>
<text x="381.1" y="774.4" font-size="11.2" fill="#000" text-anchor="middle">3</text>
<rect x="247.7" y="853.5" width="19.6" height="14.2" rx="2.4" fill="#fff" stroke="#333" stroke-width="0.8"/>
<text x="257.5" y="864.6" font-size="11.2" fill="#000" text-anchor="middle">11</text>
<circle cx="197.0" cy="949.0" r="4.9" fill="#13c562"/>
<text x="204.8" y="952.4" font-size="9.6" fill="#373d3f"><tspan font-weight="700">Reprovado</tspan> (1)</text>
<circle cx="281.8" cy="949.0" r="4.9" fill="#0b3540"/>
<text x="289.6" y="952.4" font-size="9.6" fill="#373d3f"><tspan font-weight="700">Em análise</tspan> (3)</text>
<circle cx="366.7" cy="949.0" r="4.9" fill="#3364cc"/>
<text x="374.5" y="952.4" font-size="9.6" fill="#373d3f"><tspan font-weight="700">Aprovada</tspan> (11)</text>
<line x1="677.8" y1="734.1" x2="1212.4" y2="734.1" stroke="#e6e6e6" stroke-width="0.9"/>
<line x1="677.8" y1="766.6" x2="1212.4" y2="766.6" stroke="#e6e6e6" stroke-width="0.9"/>
<line x1="677.8" y1="799.1" x2="1212.4" y2="799.1" stroke="#e6e6e6" stroke-width="0.9"/>
<line x1="677.8" y1="831.6" x2="1212.4" y2="831.6" stroke="#e6e6e6" stroke-width="0.9"/>
<line x1="677.8" y1="864.1" x2="1212.4" y2="864.1" stroke="#e6e6e6" stroke-width="0.9"/>
<line x1="677.8" y1="896.6" x2="1212.4" y2="896.6" stroke="#dcdcdc" stroke-width="0.9"/>
<line x1="677.8" y1="896.6" x2="677.8" y2="901.6" stroke="#dcdcdc" stroke-width="0.9"/>
<line x1="811.4" y1="896.6" x2="811.4" y2="901.6" stroke="#dcdcdc" stroke-width="0.9"/>
<line x1="945.1" y1="896.6" x2="945.1" y2="901.6" stroke="#dcdcdc" stroke-width="0.9"/>
<line x1="1078.8" y1="896.6" x2="1078.8" y2="901.6" stroke="#dcdcdc" stroke-width="0.9"/>
<line x1="1212.4" y1="896.6" x2="1212.4" y2="901.6" stroke="#dcdcdc" stroke-width="0.9"/>
<text x="663.4" y="735.1" font-size="8.8" fill="#373d3f" text-anchor="end">25</text>
<text x="663.4" y="767.6" font-size="8.8" fill="#373d3f" text-anchor="end">20</text>
<text x="663.4" y="800.1" font-size="8.8" fill="#373d3f" text-anchor="end">15</text>
<text x="663.4" y="832.6" font-size="8.8" fill="#373d3f" text-anchor="end">10</text>
<text x="663.4" y="865.1" font-size="8.8" fill="#373d3f" text-anchor="end">5</text>
<text x="663.4" y="897.6" font-size="8.8" fill="#373d3f" text-anchor="end">0</text>
<defs><linearGradient id="ag" x1="0" y1="0" x2="0" y2="1"><stop offset="0" stop-color="#13c562" stop-opacity="0.45"/><stop offset="1" stop-color="#13c562" stop-opacity="0.12"/></linearGradient></defs>
<path d="M677.8 890.1 L811.4 890.1 L945.1 890.1 C990.1 890.1 1033.8 885.1 1078.8 883.6 C1123.8 880.6 1159.4 768.1 1212.4 760.1 L1212.4 896.6 L677.8 896.6 Z" fill="url(#ag)"/>
<path d="M677.8 890.1 L811.4 890.1 L945.1 890.1 C990.1 890.1 1033.8 885.1 1078.8 883.6 C1123.8 880.6 1159.4 768.1 1212.4 760.1" fill="none" stroke="#13c562" stroke-width="3.3" stroke-linecap="butt"/>
<rect x="670.4" y="880.2" width="14.7" height="14.6" rx="2.4" fill="#13c562" stroke="#444" stroke-width="0.8"/>
<text x="677.8" y="891.2" font-size="11.2" fill="#fff" stroke="#fff" stroke-width=".3" text-anchor="middle">1</text>
<rect x="804.0" y="880.2" width="14.7" height="14.6" rx="2.4" fill="#0b3540" stroke="#444" stroke-width="0.8"/>
<text x="811.4" y="891.2" font-size="11.2" fill="#fff" stroke="#fff" stroke-width=".3" text-anchor="middle">1</text>
<rect x="937.7" y="880.2" width="14.7" height="14.6" rx="2.4" fill="#3364cc" stroke="#444" stroke-width="0.8"/>
<text x="945.1" y="891.2" font-size="11.2" fill="#fff" stroke="#fff" stroke-width=".3" text-anchor="middle">1</text>
<rect x="1071.2" y="874.4" width="15.5" height="14.0" rx="2.4" fill="#dc3912" stroke="#444" stroke-width="0.8"/>
<text x="1079.0" y="885.1" font-size="11.2" fill="#fff" stroke="#fff" stroke-width=".3" text-anchor="middle">2</text>
<rect x="1202.1" y="750.7" width="20.7" height="13.6" rx="2.4" fill="#ff9900" stroke="#444" stroke-width="0.8"/>
<text x="1212.4" y="761.2" font-size="11.2" fill="#fff" stroke="#fff" stroke-width=".3" text-anchor="middle">21</text>
<text x="677.8" y="917" font-size="9.6" fill="#373d3f" text-anchor="middle">Consórcio</text>
<text x="811.4" y="917" font-size="9.6" fill="#373d3f" text-anchor="middle">Consignado</text>
<text x="945.1" y="917" font-size="9.6" fill="#373d3f" text-anchor="middle">Seguros</text>
<text x="1078.8" y="917" font-size="9.6" fill="#373d3f" text-anchor="middle">Capitalização</text>
<text x="1212.4" y="917.0" font-size="9.6" fill="#373d3f" text-anchor="middle">Crédito</text>
<text x="1212.4" y="929.3" font-size="9.6" fill="#373d3f" text-anchor="middle">Imobiliário</text>
<text x="1212.4" y="941.6" font-size="9.6" fill="#373d3f" text-anchor="middle">Residencial</text>
<g fill="none" stroke="#6e8192" stroke-width="1.1"><circle cx="1152.6" cy="703.8" r="5.2"/><path d="M1150 703.8 h5.2 M1152.6 701.2 v5.2"/><circle cx="1169.1" cy="703.8" r="5.2"/><path d="M1166.5 703.8 h5.2"/></g>
<g fill="none" stroke="#008ffb" stroke-width="1.6"><circle cx="1186.6" cy="702.6" r="3.8"/><path d="M1189.4 705.6 l3.8 4" stroke-width="2"/><path d="M1184.8 702.6 h3.6 M1186.6 700.8 v3.6" stroke-width="1"/></g>
<path d="M1202.600 709.300 c-1.300 -1.500 -2.900 -3.100 -4.100 -4.300 c-.6 -.7 .3 -1.700 1.200 -1.100 l2.600 1.700 v-6.200 c0 -1.100 1.600 -1.100 1.600 0 v-.9 c0 -1.100 1.700 -1.100 1.700 0 v.3 c0 -1.100 1.700 -1.100 1.700 0 v.9 c0 -1.100 1.700 -1.100 1.700 0 v6 c0 1.700 -.5 2.600 -.9 3.600 z" fill="#fff" stroke="#6e8192" stroke-width="1"/>
<path d="M1203.900 699.300 v4.600 M1205.600 698.600 v5.300 M1207.300 699.300 v4.600" stroke="#6e8192" stroke-width=".9" fill="none" opacity=".75"/>
<path d="M1224.100 698 l6.400 5.900 h-1.800 v5.600 h-3.300 v-3.800 h-2.600 v3.800 h-3.300 v-5.600 h-1.800 z" fill="#6e8192"/>
<line x1="1234.2" y1="700.7" x2="1246" y2="700.7" stroke="#6e8192" stroke-width="1.4"/>
<line x1="1234.2" y1="704.1" x2="1246" y2="704.1" stroke="#6e8192" stroke-width="1.4"/>
<line x1="1234.2" y1="707.5" x2="1246" y2="707.5" stroke="#6e8192" stroke-width="1.4"/>
</svg>
<div class="a" style="left:153.00px;top:86.60px;width:189.00px;height:164.80px;background:#fff;border-radius:3px;border:1px solid rgba(0,0,0,.2);box-shadow:0 5px 11px rgba(0,0,0,.2)"></div>
<svg class="tx" width="1" height="1"><text x="172.20" y="110.40" font-size="13.50" fill="#33373c" textLength="59.40" lengthAdjust="spacingAndGlyphs">Consultar</text></svg>
<svg class="tx" width="1" height="1"><text x="172.20" y="135.40" font-size="13.50" fill="#33373c" textLength="118.00" lengthAdjust="spacingAndGlyphs">Aceitar Pré-Análise</text></svg>
<svg class="tx" width="1" height="1"><text x="172.20" y="160.40" font-size="13.50" fill="#33373c" textLength="30.00" lengthAdjust="spacingAndGlyphs">Lead</text></svg>
<svg class="tx" width="1" height="1"><text x="172.20" y="185.40" font-size="13.50" fill="#33373c" textLength="135.40" lengthAdjust="spacingAndGlyphs">Clientes Pessoa Física</text></svg>
<svg class="tx" width="1" height="1"><text x="172.20" y="210.40" font-size="13.50" fill="#33373c" textLength="149.70" lengthAdjust="spacingAndGlyphs">Clientes Pessoa Jurídica</text></svg>
<svg class="tx" width="1" height="1"><text x="172.20" y="235.40" font-size="13.50" fill="#33373c" textLength="116.90" lengthAdjust="spacingAndGlyphs">Grupos Consórcios</text></svg>
<div class="a" style="left:150.40px;top:52.50px;width:114.10px;height:27.10px;border:3.3px solid #ff0000"></div>
<div class="a" style="left:153.00px;top:166.30px;width:188.20px;height:28.80px;border:3.3px solid #ff0000"></div>
<svg style="left:0;top:0" width="200" height="220"><g stroke="#ff0000" stroke-width="3" fill="#ff0000"><line x1="49" y1="152.4" x2="122" y2="101.5"/><line x1="18.5" y1="188.8" x2="124" y2="187.8"/></g><polygon points="139.5,89.1 116.3,95.7 124.6,109" fill="#ff0000"/><polygon points="145.5,187.7 122.3,180.3 122.3,195.7" fill="#ff0000"/></svg>
<svg style="left:1200px;top:931px" width="48" height="48" viewBox="0 0 48 48"><circle cx="23.800" cy="23.900" r="19.900" fill="#0a3a2a"/><g fill="#fff"><path d="M20.500 15.300 c-4.600 0 -8.300 2.800 -8.300 6.300 c0 1.500 .7 2.900 1.800 4 c-.3 1.300 -1.100 2.300 -2 3 c1.800 0 3.300 -.5 4.400 -1.300 c1.200 .4 2.600 .6 4.100 .6 c4.600 0 8.300 -2.800 8.300 -6.300 s-3.700 -6.300 -8.300 -6.300 z"/><path d="M30.400 22.400 c0 3.800 -3.500 6.700 -8.200 7.100 c1.400 1.700 3.800 2.700 6.400 2.700 c1.100 0 2.200 -.2 3.100 -.5 c1 .8 2.500 1.300 4.200 1.300 c-.9 -.7 -1.600 -1.600 -1.900 -2.800 c1 -1 1.600 -2.200 1.600 -3.500 c0 -2.100 -2.100 -3.900 -5.200 -4.300 z" stroke="#0a3a2a" stroke-width=".6"/></g></svg>
</body></html>
